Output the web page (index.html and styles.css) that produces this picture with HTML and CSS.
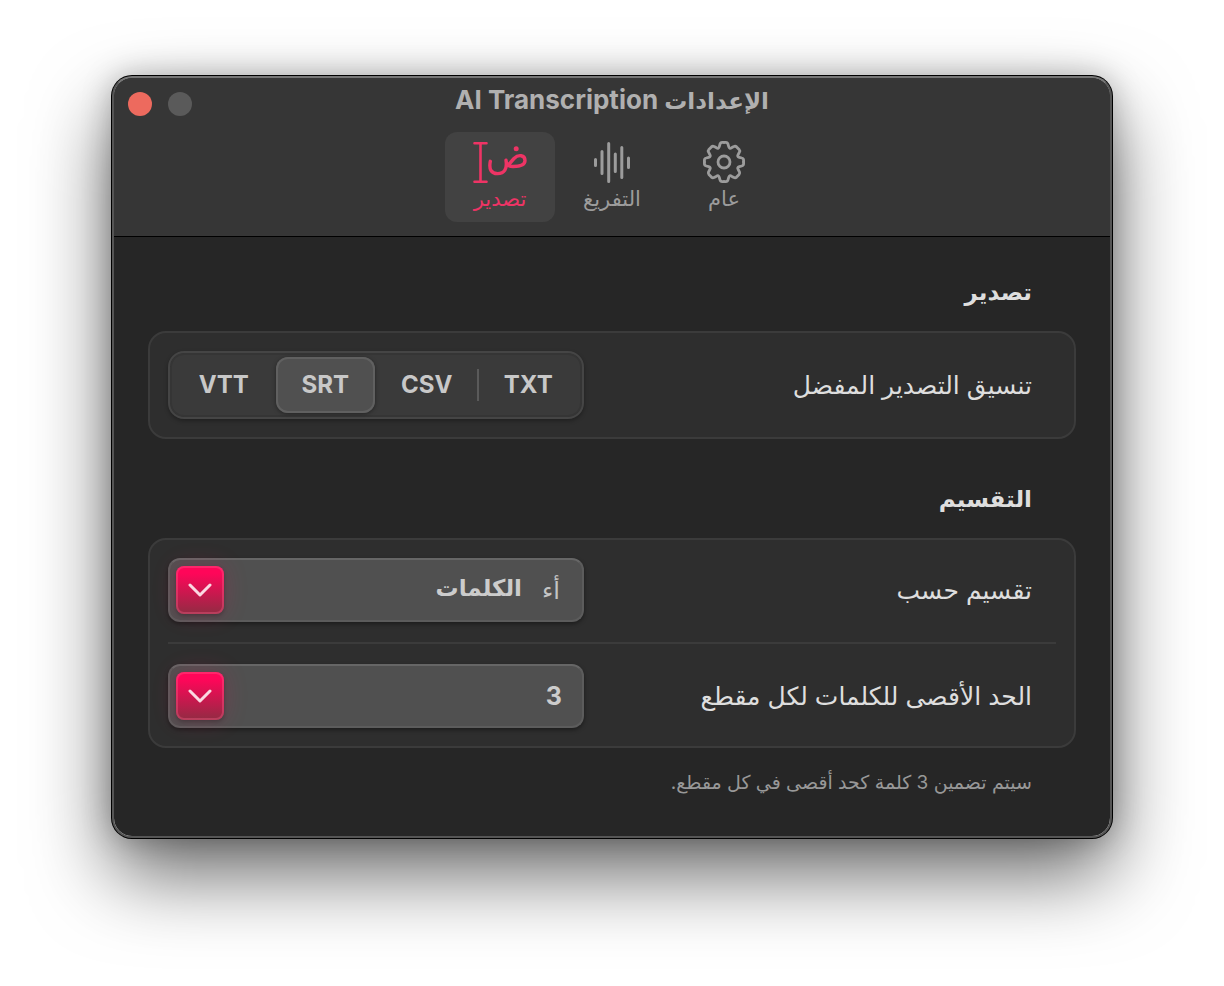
FILE: index.html
```html
<!DOCTYPE html>
<html lang="ar" dir="rtl">
<head>
  <meta charset="UTF-8">
  <meta name="viewport" content="width=device-width, initial-scale=1">
  <title>الإعدادات AI Transcription</title>
  <link rel="stylesheet" href="styles.css">
</head>
<body>
  <div class="window">
    <header class="toolbar">
      <div class="titlebar">
        <div class="window-buttons">
          <button class="dot close" type="button" aria-label="إغلاق"></button>
          <button class="dot" type="button" aria-label="تصغير" disabled></button>
        </div>
        <h1><span class="title-ar">الإعدادات</span> AI Transcription</h1>
      </div>
      <nav class="tabs">
        <button class="tab" type="button">
          <svg width="44" height="44" viewBox="-22 -22 44 44" fill="none" stroke="currentColor" stroke-width="2.8" stroke-linecap="round" stroke-linejoin="round">
            <path id="gear-quarter" d="M0-19.6H1.8Q3.600-19.600 4-17.800L4.700-15.300Q5.400-12.800 7.500-14.200L9.800-15.400Q11.300-16.300 12.600-15.100L15.100-12.600Q16.300-11.300 15.400-9.800L14.200-7.500Q12.800-5.400 15.300-4.700L17.800-4Q19.600-3.600 19.600-1.800V0"/>
            <use href="#gear-quarter" transform="rotate(90)"/>
            <use href="#gear-quarter" transform="rotate(180)"/>
            <use href="#gear-quarter" transform="rotate(270)"/>
            <circle r="6"/>
          </svg>
          <span>عام</span>
        </button>
        <button class="tab" type="button">
          <svg width="44" height="44" viewBox="0 0 44 44" fill="none" stroke="currentColor" stroke-width="3" stroke-linecap="round">
            <path d="M5.500 19.500V25.500M12 11.500V33.500M18.700 3.500V41.500M25.300 14V31.500M31.800 7.500V37.500M38.500 18V27.500"/>
          </svg>
          <span>التفريغ</span>
        </button>
        <button class="tab active" type="button" aria-current="page">
          <svg width="60" height="44" viewBox="0 0 60 44" fill="none" stroke="currentColor" stroke-width="2.6" stroke-linecap="round" stroke-linejoin="round">
            <path d="M4.500 3.200H16.500M10.500 3.200V41.800M4.500 41.800H16.500"/>
            <path d="M20.300 21.300C18.800 29 21 33.600 27.500 33.600C34.500 33.600 37.300 29 36 20.300C36.300 24.500 38 26.500 43 26.500C51 26.500 55 24.500 55 20.500C55 15 48.500 14 44 18.500Q39.500 23.500 38.500 25.500" stroke-width="3.400"/>
            <circle cx="46.200" cy="8.700" r="2.500" fill="currentColor" stroke="none"/>
          </svg>
          <span>تصدير</span>
        </button>
      </nav>
    </header>

    <main class="content">
      <h2>تصدير</h2>
      <section class="card">
        <div class="row">
          <span class="label" id="formatLabel">تنسيق التصدير المفضل</span>
          <div class="segmented" role="radiogroup" aria-labelledby="formatLabel">
            <input type="radio" name="format" id="txt"><label for="txt">TXT</label>
            <input type="radio" name="format" id="csv"><label for="csv" class="divided">CSV</label>
            <input type="radio" name="format" id="srt" checked><label for="srt">SRT</label>
            <input type="radio" name="format" id="vtt"><label for="vtt">VTT</label>
          </div>
        </div>
      </section>

      <h2>التقسيم</h2>
      <section class="card">
        <div class="row">
          <label class="label" for="splitBy">تقسيم حسب</label>
          <div class="picker with-icon">
            <span class="picker-icon" aria-hidden="true">أء</span>
            <select id="splitBy">
              <option>الكلمات</option>
            </select>
            <span class="arrow">
              <svg width="24" height="14" viewBox="0 0 24 14" fill="none" stroke="currentColor" stroke-width="3" stroke-linecap="round" stroke-linejoin="round"><path d="M2 2L12 12L22 2"/></svg>
            </span>
          </div>
        </div>
        <hr>
        <div class="row">
          <label class="label" for="maxWords">الحد الأقصى للكلمات لكل مقطع</label>
          <div class="picker">
            <select id="maxWords">
              <option>3</option>
            </select>
            <span class="arrow">
              <svg width="24" height="14" viewBox="0 0 24 14" fill="none" stroke="currentColor" stroke-width="3" stroke-linecap="round" stroke-linejoin="round"><path d="M2 2L12 12L22 2"/></svg>
            </span>
          </div>
        </div>
      </section>
      <p class="note">سيتم تضمين 3 كلمة كحد أقصى في كل مقطع.</p>
    </main>
  </div>
</body>
</html>
```

FILE: styles.css
```css
* {
  box-sizing: border-box;
}
body {
  margin: 0;
  padding: 76px 112px 148px;
  background: #fff;
  font-family: Inter, "DejaVu Sans", sans-serif;
  color: #dedede;
}
button, select {
  font-family: inherit;
}
.window {
  border: 2px solid #555;
  border-top-color: #767676;
  border-radius: 20px;
  background: #262626;
  background-clip: padding-box;
  box-shadow: 0 0 0 1px #000, 0 36px 80px rgba(0, 0, 0, 0.6), 0 0 30px rgba(0, 0, 0, 0.25);
  overflow: hidden;
}

/* toolbar */
.toolbar {
  background: #363636;
  border-bottom: 1px solid #000;
  padding-bottom: 14px;
}
.titlebar {
  display: grid;
  grid-template-columns: 1fr auto 1fr;
  direction: ltr;
  height: 54px;
}
.window-buttons {
  display: flex;
  gap: 16px;
  padding: 14px;
}
.dot {
  width: 24px;
  height: 24px;
  padding: 0;
  border: none;
  border-radius: 50%;
  background: #5a5a5a;
}
.dot.close {
  background: #ed6a5e;
}
h1 {
  direction: rtl;
  margin: 0;
  font-size: 26px;
  font-weight: 700;
  line-height: 44px;
  color: #b0b0b0;
}
.title-ar {
  font-size: 23px;
}
.tabs {
  display: flex;
  justify-content: center;
  gap: 2px;
}
.tab {
  display: flex;
  flex-direction: column;
  align-items: center;
  width: 110px;
  height: 90px;
  padding: 8px 0 0;
  border: none;
  border-radius: 12px;
  background: none;
  color: #9c9c9c;
  font-size: 21px;
  line-height: 30px;
}
.tab.active {
  background: #424242;
  color: #ee3465;
}
.tab svg {
  flex: none;
}

/* settings */
.content {
  padding: 40px 34px 38px;
}
h2 {
  margin: 0 44px 24px;
  font-size: 23px;
  font-weight: 700;
  line-height: 30px;
}
.card {
  margin-bottom: 45px;
  padding: 18px;
  border: 2px solid #3b3b3b;
  border-radius: 18px;
  background: #2e2e2e;
}
.row {
  display: grid;
  grid-template-columns: 1fr 416px;
  align-items: center;
}
.label {
  padding-right: 24px;
  font-size: 25px;
  line-height: 30px;
}
hr {
  margin: 20px 0;
  border: none;
  border-top: 2px solid #3b3b3b;
}
.segmented {
  display: flex;
  gap: 2px;
  height: 68px;
  padding: 4px;
  border: 2px solid #454545;
  border-radius: 16px;
  background: #3a3a3a;
  box-shadow: inset 0 0 0 2px #353535, 0 2px 4px rgba(0, 0, 0, 0.3);
}
.segmented input {
  position: absolute;
  opacity: 0;
}
.segmented label {
  position: relative;
  flex: 1;
  border-radius: 12px;
  font-size: 24px;
  font-weight: 700;
  line-height: 56px;
  text-align: center;
  color: #c8c8c8;
}
.segmented input:checked + label {
  background: #505050;
  box-shadow: inset 0 0 0 2px #606060, 0 1px 4px rgba(0, 0, 0, 0.4);
}
.segmented .divided::before {
  content: "";
  position: absolute;
  top: 12px;
  right: -2px;
  width: 2px;
  height: 32px;
  background: #5a5a5a;
}
.picker {
  position: relative;
}
.picker select {
  display: block;
  width: 100%;
  height: 64px;
  padding: 0 20px;
  appearance: none;
  border: 2px solid #5c5c5c;
  border-top-color: #666;
  border-radius: 12px;
  background: #505050;
  box-shadow: 0 2px 4px rgba(0, 0, 0, 0.4);
  color: #ccc;
  font-size: 25px;
  font-weight: 700;
}
.picker.with-icon select {
  padding: 0 60px 4px 60px;
  font-size: 23px;
}
.picker-icon {
  position: absolute;
  top: 18px;
  right: 24px;
  font-size: 24px;
  line-height: 30px;
  color: #c4c4c4;
}
.arrow {
  position: absolute;
  top: 8px;
  left: 8px;
  display: grid;
  place-items: center;
  width: 48px;
  height: 48px;
  border-radius: 8px;
  background: linear-gradient(#ff0659 15%, #922b43);
  box-shadow: inset 0 0 0 2px rgba(255, 100, 140, 0.35), 0 2px 4px rgba(0, 0, 0, 0.25), 0 0 24px rgba(255, 6, 89, 0.2);
  color: #fbd9e2;
  pointer-events: none;
}
.content .card:last-of-type {
  margin-bottom: 20px;
}
.note {
  margin: 0 44px;
  font-size: 19px;
  line-height: 30px;
  color: #989898;
}
```
